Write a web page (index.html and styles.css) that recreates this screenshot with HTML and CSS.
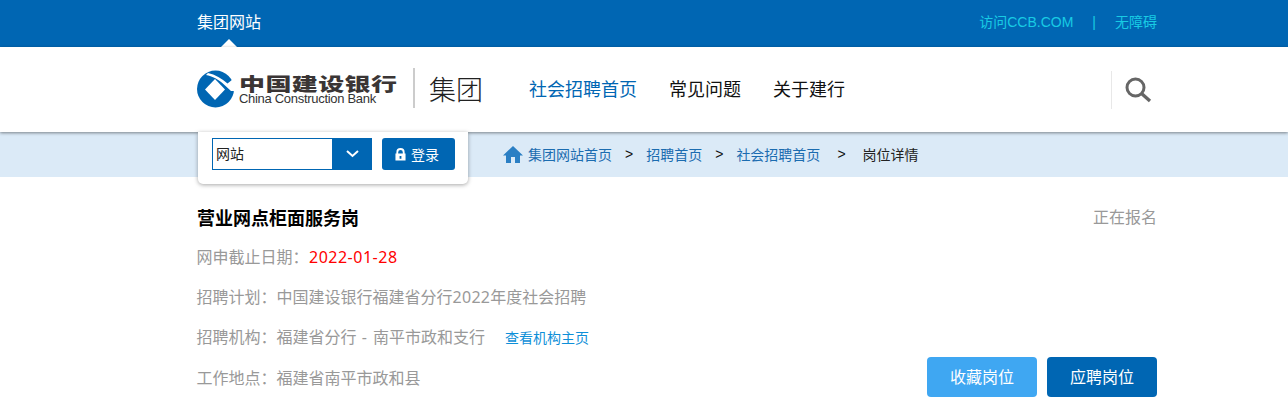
FILE: index.html
```html
<!DOCTYPE html>
<html lang="zh">
<head>
<meta charset="utf-8">
<title>岗位详情</title>
<link rel="stylesheet" href="styles.css">
</head>
<body>
<div class="topbar">
  <div class="wrap topbar-in">
    <a class="site-tab">集团网站</a>
    <div class="top-links"><a>访问CCB.COM</a><span class="sep">|</span><a>无障碍</a></div>
  </div>
</div>
<header class="header">
  <div class="wrap header-in">
    <div class="logo">
      <svg class="logo-mark" width="38" height="38" viewBox="0 0 38 38">
        <circle cx="18.500" cy="19" r="18.500" fill="#0066b3"/>
        <path d="M18 9 28 19.500 18 30 8 19.500Z" fill="#fff"/>
        <path d="M9 5C15 6 22 9.500 27.500 15L34 21H40V14L35.500 9.500 30.500 13.500C25 8.500 18 4.500 11 3Z" fill="#fff"/>
      </svg>
      <div class="logo-text">
        <div class="logo-cn">中国建设银行</div>
        <div class="logo-en">China Construction Bank</div>
      </div>
      <div class="logo-group">集团</div>
    </div>
    <nav class="nav">
      <a class="nav-on">社会招聘首页</a><a>常见问题</a><a>关于建行</a>
    </nav>
    <div class="search">
      <svg width="28" height="28" viewBox="0 0 28 28" fill="none" stroke="#666">
        <circle cx="11.500" cy="11.500" r="8.500" stroke-width="3"/>
        <path d="M17.500 17.500 26 25" stroke-width="3.400"/>
      </svg>
    </div>
  </div>
</header>
<div class="crumbband">
  <div class="wrap crumb-in">
    <div class="login-card">
      <div class="select"><span class="select-val">网站</span><span class="select-btn">
        <svg width="13" height="8" viewBox="0 0 13 8" fill="none" stroke="#fff" stroke-width="2"><path d="M1 1 6.500 6 12 1"/></svg>
      </span></div>
      <a class="login-btn">
        <svg width="11" height="13" viewBox="0 0 12 14"><path fill="#fff" d="M1.500 6V4.500a4.500 4.500 0 0 1 9 0V6H11.500V13.500H.500V6ZM3.500 6h5V4.500a2.500 2.500 0 0 0-5 0ZM5 8.500v3h2v-3Z" fill-rule="evenodd"/></svg>
        登录
      </a>
    </div>
    <div class="crumbs">
      <svg class="home" width="20" height="17" viewBox="0 0 20 17"><path fill="#2a7fc4" d="M10 0 20 9.500H17V17H12V11H8V17H3V9.500H0Z"/></svg>
      <a>集团网站首页</a><span class="gt">&gt;</span><a>招聘首页</a><span class="gt">&gt;</span><a>社会招聘首页</a><span class="gt gt-last">&gt;</span><span class="cur">岗位详情</span>
    </div>
  </div>
</div>
<main class="wrap job">
  <div class="job-head">
    <h1 class="job-title">营业网点柜面服务岗</h1>
    <span class="job-status">正在报名</span>
  </div>
  <p class="row">网申截止日期：<span class="date">2022-01-28</span></p>
  <p class="row">招聘计划：中国建设银行福建省分行<span class="num">2022</span>年度社会招聘</p>
  <p class="row">招聘机构：福建省分行<span class="dash"> - </span>南平市政和支行<a class="org-link">查看机构主页</a></p>
  <div class="last-row">
    <p class="row">工作地点：福建省南平市政和县</p>
    <div class="actions"><a class="btn btn-light">收藏岗位</a><a class="btn btn-dark">应聘岗位</a></div>
  </div>
</main>
</body>
</html>
```
FILE: styles.css
```css
* { box-sizing: border-box; }
html, body { margin: 0; padding: 0; }
body {
  background: #fff;
  font-family: "Noto Sans CJK SC", "Liberation Sans", sans-serif;
  font-size: 14px;
  height: 417px;
  overflow: hidden;
}
p, h1 { margin: 0; }
.wrap { width: 960px; margin-left: 197px; }

.topbar { height: 47px; background: #0066b3; }
.topbar-in { display: flex; justify-content: space-between; height: 47px; }
.site-tab {
  position: relative;
  color: #fff;
  font-size: 16px;
  line-height: 43px;
  width: 64px;
}
.site-tab::after {
  content: "";
  position: absolute;
  left: 24px;
  bottom: 0;
  border: 8px solid transparent;
  border-top: 0;
  border-bottom-color: #fff;
}
.top-links {
  color: #18cbe4;
  font-family: "Liberation Sans", "Noto Sans CJK SC", sans-serif;
  font-size: 14px;
  line-height: 45px;
  display: flex;
}
.sep { margin: 0 19px; }

.header {
  height: 85px;
  background: #fff;
  box-shadow: 0 1px 3px rgba(0,0,0,.45);
  position: relative;
}
.header-in { display: flex; align-items: center; height: 85px; padding-bottom: 4px; }
.logo { display: flex; align-items: center; width: 332px; }
.logo-mark { flex: none; position: relative; top: 1px; }
.logo-text { margin-left: 4px; width: 174px; color: #333; height: 38px; padding-top: 5px; }
.logo-cn {
  font-size: 26px;
  font-weight: 900;
  line-height: 18px;
  letter-spacing: .4px;
  color: #3a3535;
  white-space: nowrap;
  transform: scaleY(.72);
  transform-origin: 0 50%;
}
.logo-en {
  font-family: "Liberation Sans", sans-serif;
  font-size: 13px;
  line-height: 13px;
  letter-spacing: -.3px;
  white-space: nowrap;
}
.logo-group {
  border-left: 2px solid #ccc;
  height: 40px;
  padding-left: 14px;
  font-size: 27px;
  line-height: 42px;
  color: #222;
  white-space: nowrap;
  font-weight: 300;
}
.nav { display: flex; gap: 32px; font-size: 18px; color: #111; }
.nav-on { color: #0066b3; }
.search {
  margin-left: auto;
  width: 46px;
  height: 38px;
  border-left: 1px solid #e8e8e8;
  display: flex;
  align-items: center;
  justify-content: flex-end;
  padding-right: 5px;
  position: relative;
  top: 2px;
}

.crumbband { height: 45px; background: #dbeaf7; }
.crumb-in { display: flex; align-items: center; height: 45px; position: relative; }
.login-card {
  position: absolute;
  left: 1px;
  top: 0;
  width: 270px;
  height: 52px;
  background: #fff;
  border-radius: 0 0 5px 5px;
  box-shadow: 0 1px 4px rgba(0,0,0,.35);
  padding: 6px 13px 0 14px;
  display: flex;
  gap: 10px;
  z-index: 2;
}
.select {
  width: 160px;
  height: 32px;
  border: 1px solid #0066b3;
  display: flex;
}
.select-val { width: 119px; font-size: 14px; line-height: 29px; padding-left: 3px; color: #222; }
.select-btn {
  flex: 1;
  background: #0066b3;
  display: flex;
  align-items: center;
  justify-content: center;
  padding-left: 2px;
}
.login-btn {
  width: 73px;
  height: 32px;
  background: #0066b3;
  border-radius: 3px;
  color: #fff;
  display: flex;
  align-items: center;
  gap: 5px;
  padding-left: 13px;
  font-size: 14px;
}
.crumbs {
  margin-left: 306px;
  display: flex;
  align-items: center;
  font-size: 14px;
  color: #1b6cb0;
  line-height: 45px;
}
.home { margin-right: 5px; }
.gt { color: #111; margin: 0 13px; font-family: "Liberation Sans", sans-serif; }
.gt-last { margin-right: 17px; margin-left: 17px; }
.cur { color: #222; }

.job { padding-top: 28px; }
.job-head { display: flex; justify-content: space-between; align-items: center; height: 24px; }
.job-title { font-size: 18px; font-weight: 700; color: #000; line-height: 24px; }
.job-status { font-size: 16px; color: #999; position: relative; top: -1px; }
.row { font-size: 16px; color: #999; line-height: 24px; margin-top: 16px; font-family: "Noto Sans", "Noto Sans CJK SC", sans-serif; margin-left: -.5px; }
.job-head + .row { margin-top: 16px; }
.date { color: #f00; letter-spacing: .5px; margin-left: .5px; }
.num { letter-spacing: .3px; }
.dash { letter-spacing: 1px; }
.org-link { color: #0e8fd8; font-size: 14px; margin-left: 20px; }
.last-row { display: flex; justify-content: space-between; align-items: center; margin-top: 7px; }
.last-row .row { margin-top: 1px; }
.actions { display: flex; gap: 10px; }
.btn {
  width: 110px;
  height: 40px;
  border-radius: 4px;
  color: #fff;
  font-size: 16px;
  line-height: 39px;
  text-align: center;
}
.btn-light { background: #3fa7f2; }
.btn-dark { background: #0066b3; }
```
